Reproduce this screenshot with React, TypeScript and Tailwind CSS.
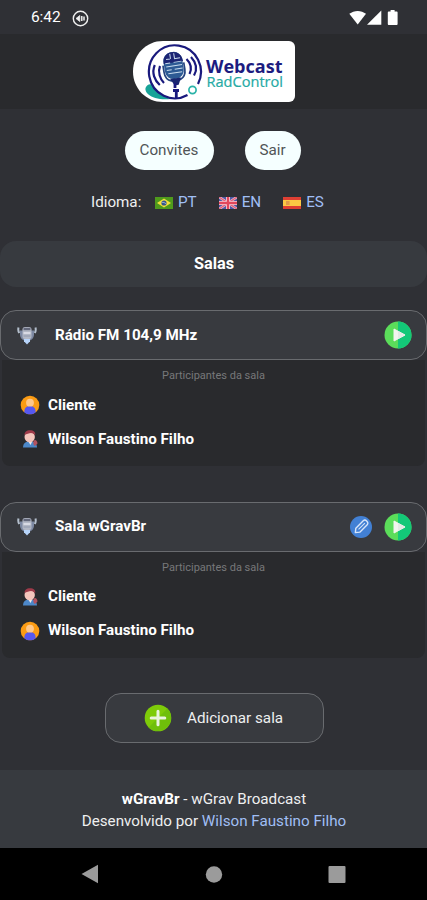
import type { ReactNode } from 'react'

type ParticipantKind = 'host' | 'guest'

interface Participant {
  name: string
  kind: ParticipantKind
}

interface Room {
  name: string
  editable: boolean
  participants: Participant[]
}

const ROOMS: Room[] = [
  {
    name: 'Rádio FM 104,9 MHz',
    editable: false,
    participants: [
      { name: 'Cliente', kind: 'host' },
      { name: 'Wilson Faustino Filho', kind: 'guest' },
    ],
  },
  {
    name: 'Sala wGravBr',
    editable: true,
    participants: [
      { name: 'Cliente', kind: 'guest' },
      { name: 'Wilson Faustino Filho', kind: 'host' },
    ],
  },
]

function StatusBar() {
  return (
    <div className="flex h-[34px] shrink-0 items-center bg-[#2f3035] pt-[2px] pl-[31px] pr-[28px] text-white">
      <span className="w-[30px] text-[15.500px] leading-none tracking-[-0.1px]">6:42</span>
      <svg className="ml-[11px]" width="17" height="17" viewBox="0 0 17 17" fill="none" stroke="#f0f0f0">
        <circle cx="8.5" cy="8.5" r="7.2" strokeWidth="1.4" />
        <path d="M4 8.500 7.800 5.500v6z" fill="#f0f0f0" strokeWidth="0.8" />
        <path d="M9.800 6v5M12 6.500v4" strokeWidth="1.5" />
      </svg>
      <svg className="ml-auto" width="50" height="16" viewBox="0 0 50 16" fill="#fff">
        <path d="M0.3 3.800C5.200-.1 12.200-.1 17 3.800L8.700 14.600z" />
        <path d="M32.300.4v14.400H18z" />
        <path d="M41.600 0h4v1.600h2.200c.5 0 .8.400.8.900V14c0 .5-.3.900-.8.900h-8.200c-.5 0-.8-.4-.8-.9V2.500c0-.5.3-.9.8-.9h2z" />
      </svg>
    </div>
  )
}

function Logo() {
  return (
    <svg width="162" height="61" viewBox="0 0 162 61">
      <path d="M30 0h126a6 6 0 0 1 6 6v49a6 6 0 0 1-6 6H30C13 61 0 47.500 0 30.500S13 0 30 0z" fill="#fff" />
      <path d="M12.500 47c1-3 4-4.500 6-3.500 5 8 11 12 19 14.500-10 1-18-1-22-4.500-2.500-2-3.500-4.500-3-6.500z" fill="#17a398" />
      {/* ring around the microphone, open where the small dot sits */}
      <path d="M54.500 54A26 26.500 0 1 1 65 43" fill="none" stroke="#19197d" strokeWidth="2.200" />
      <circle cx="59.500" cy="49" r="3.600" fill="#fff" stroke="#2bb3a8" strokeWidth="1.700" />
      <g transform="rotate(-9 40 24)">
        <rect x="31" y="11" width="19" height="27" rx="8.500" fill="#2d5a94" />
        <path d="M31 21.500c-.5-14 19.500-14 19.500 0z" fill="#1b2473" />
        <path
          d="M34 17.500h4M42 18h6M32.500 21.500h5M41 21.500h8M33 25h16M33 28.500h5M41 28.500h8M34 32h14M38.500 12.500v5M42.500 12.500v5"
          stroke="#c9dcee"
          strokeWidth="1"
        />
        <path d="M30 23v7c0 5.500 3 8.500 6 9.500h9c4-1.500 6-4.500 6-9.500v-7" fill="none" stroke="#24437f" strokeWidth="1.700" />
        <path d="M35 37.500h11l-3.500 7h-4z" fill="#19256f" />
      </g>
      <path d="M42 42v5M43.300 49v9M40 49.500h6" stroke="#19197d" strokeWidth="2.800" />
      <path
        d="M27 25c-2.400 6 0 13 4 17M21.800 24c-3.500 8 0 15.500 5 20M53.500 18c4.500 4.500 5.500 10 3 15M58 16c5.500 6 6.500 12.500 3 18.500"
        fill="none"
        stroke="#19197d"
        strokeWidth="2.200"
      />
      <text
        x="73"
        y="32.300"
        textLength="76.500"
        lengthAdjust="spacingAndGlyphs"
        className="font-['Open_Sans',sans-serif] text-[17px] font-bold"
        fill="#1c1c80"
      >
        Webcast
      </text>
      <text
        x="73.500"
        y="46"
        textLength="76.500"
        lengthAdjust="spacingAndGlyphs"
        className="font-['Open_Sans',sans-serif] text-[14.500px] font-medium"
        fill="#25aaa4"
        stroke="#25aaa4"
        strokeWidth="0.2"
      >
        RadControl
      </text>
    </svg>
  )
}

function BrazilFlag() {
  return (
    <svg width="18" height="12" viewBox="0 0 18 12">
      <path fill="#4f9a1c" d="M0 0h18v12H0z" />
      <path fill="#f3df3d" d="M9 1.500 16 6l-7 4.500L2 6z" />
      <circle cx="9" cy="6" r="2.600" fill="#34548c" />
      <path d="M6.700 5.300q2.500-.3 4.500 1.500" stroke="#d8e4ee" strokeWidth=".6" fill="none" />
    </svg>
  )
}

function UkFlag() {
  return (
    <svg width="18" height="12" viewBox="0 0 18 12">
      <path fill="#4b59a6" d="M0 0h18v12H0z" />
      <path d="M0 0l18 12M18 0 0 12" stroke="#efb8c6" strokeWidth="2.600" />
      <path d="M0 0l18 12M18 0 0 12" stroke="#e0607a" strokeWidth="1.200" />
      <path d="M9 0v12M0 6h18" stroke="#f3cfd9" strokeWidth="4" />
      <path d="M9 0v12M0 6h18" stroke="#e2475c" strokeWidth="2.300" />
    </svg>
  )
}

function SpainFlag() {
  return (
    <svg width="18" height="12" viewBox="0 0 18 12">
      <path fill="#de3f33" d="M0 0h18v12H0z" />
      <path fill="#fbc843" d="M0 3h18v6H0z" />
      <path fill="#e09a48" d="M3 4h3.600v4H3z" />
    </svg>
  )
}

function RoomIcon() {
  return (
    <svg width="20" height="19" viewBox="0 0 20 19">
      <path d="M1.500 1.500c-.5 2-.2 4 .8 5.500M18.500 1.500c.5 2 .2 4-.8 5.500" stroke="#b4bfcd" strokeWidth="2" fill="none" />
      <path d="M3 4.500h14v4c0 3.500-2.500 5.600-4.500 6.100h-5C5.500 14.100 3 12 3 8.500z" fill="#7d89a3" />
      <rect x="5.500" y="1" width="9" height="12" rx="2.500" fill="#b3b8c5" />
      <path d="M6.500 1.800h7v2.400h-7z" fill="#62677a" />
      <path d="M6.500 7h7" stroke="#e4e6ee" strokeWidth="1.500" />
      <path d="M6.500 10h7" stroke="#8f98ad" strokeWidth="1" />
      <path d="M7 13h6v2.300L10 18.500l-3-3.200z" fill="#b7d4fa" />
    </svg>
  )
}

function HostIcon() {
  return (
    <svg width="20" height="20" viewBox="0 0 20 20">
      <circle cx="10" cy="10" r="9.300" fill="#fb9c14" />
      <path d="M4.400 17.400c-.3-4 1.800-6.400 5.600-6.400s5.900 2.400 5.600 6.400c-3.300 2.500-7.900 2.500-11.200 0z" fill="#5658f0" />
      <circle cx="10" cy="7.700" r="3.900" fill="#ffc88a" />
    </svg>
  )
}

function GuestIcon() {
  return (
    <svg width="20" height="20" viewBox="0 0 20 20">
      <path d="M3 18.500c.2-4.200 2.200-6 7-6s6.800 1.800 7 6z" fill="#4d88c9" />
      <path d="M8 12h4.500l-2 4z" fill="#f4eeee" />
      <path d="M13.500 12c2-2.500 4 .5 4 2.500l-2.500 2.500c-1.500-1-2-2-1.500-5z" fill="#b4535f" />
      <circle cx="9.700" cy="8" r="5.200" fill="#f4c5bc" />
      <path d="M4.500 6C4.500 3 6.500 1.200 10 1.200s5.800 1.800 5.200 4.800C13.500 4.800 12.500 4 11 4c-2 .5-4.300.5-6.500 2z" fill="#9e3a49" />
    </svg>
  )
}

function PlayIcon() {
  return (
    <svg width="28" height="28" viewBox="0 0 28 28">
      <circle cx="14" cy="14" r="13.500" fill="#5bdd5a" />
      <path d="M14 .5a13.500 13.500 0 0 1 0 27z" fill="#13c878" />
      <path d="M10 8v12l11-6z" fill="#f2f4ee" stroke="#f2f4ee" strokeLinejoin="round" />
      <path d="M14 10v8l7.300-4z" fill="#e4eae4" />
    </svg>
  )
}

function EditIcon() {
  return (
    <svg width="22" height="22" viewBox="0 0 22 22">
      <circle cx="11" cy="11" r="11" fill="#4280d4" />
      <g transform="rotate(45 11 11)" fill="none" stroke="#d9e6fa" strokeWidth="1.400" strokeLinejoin="round">
        <path d="M8.200 5c0-3 5.600-3 5.600 0v10.500L11 19l-2.800-3.500z" />
        <path d="M11 5.500v9" strokeWidth="1" />
      </g>
    </svg>
  )
}

function AddIcon() {
  return (
    <svg width="28" height="28" viewBox="0 0 28 28">
      <circle cx="14" cy="14" r="13.300" fill="#7ecb09" />
      <path d="M23.400 4.600A13.300 13.300 0 0 1 4.600 23.400z" fill="#6fbf0a" />
      <path d="M14 7.200v13.600M7.200 14h13.600" stroke="#eaf3de" strokeWidth="3" strokeLinecap="round" />
    </svg>
  )
}

function Language({ flag, code }: { flag: ReactNode; code: string }) {
  return (
    <a className="flex items-center gap-[5px] text-[#a0bff5]">
      {flag}
      {code}
    </a>
  )
}

function RoomCard({ room }: { room: Room }) {
  return (
    <section>
      <div className="flex h-[50px] items-center rounded-[16px] border-[1.500px] border-[#696b6f] bg-[#383a3f] pl-[16px] pr-[14px]">
        <RoomIcon />
        <h2 className="ml-[18px] text-[15.200px] font-bold text-white">{room.name}</h2>
        <div className="ml-auto flex items-center gap-[12px]">
          {room.editable && <EditIcon />}
          <PlayIcon />
        </div>
      </div>
      <div className="mx-[2px] h-[106px] rounded-b-[8px] bg-[#292a2d] pt-[8px]">
        <p className="text-center text-[11px] leading-[16px] text-[#77787a]">Participantes da sala</p>
        <ul className="mt-[4px] pl-[18px]">
          {room.participants.map((p) => (
            <li key={p.name} className="flex h-[34px] items-center gap-[8px] text-[15.200px] font-bold text-white">
              {p.kind === 'host' ? <HostIcon /> : <GuestIcon />}
              {p.name}
            </li>
          ))}
        </ul>
      </div>
    </section>
  )
}

export default function App() {
  return (
    <div className="flex h-[900px] w-[427px] flex-col overflow-hidden bg-[#2f3035] font-['Roboto',sans-serif] text-[15.200px] text-[#eeeff0]">
      <StatusBar />
      <header className="flex h-[75px] shrink-0 justify-center bg-[#292a2d] pt-[7px] pl-[1px]">
        <Logo />
      </header>

      <nav className="mt-[22px] mr-[2px] flex justify-center gap-[31px]">
        <button className="h-[39px] w-[89px] rounded-full bg-[#f5ffff] text-[#505456]">Convites</button>
        <button className="h-[39px] w-[56px] rounded-full bg-[#f5ffff] text-[#505456]">Sair</button>
      </nav>

      <div className="mt-[22px] flex h-[21px] items-center pl-[91px]">
        <span className="w-[64px]">Idioma:</span>
        <div className="flex gap-[22px]">
          <Language flag={<BrazilFlag />} code="PT" />
          <Language flag={<UkFlag />} code="EN" />
          <Language flag={<SpainFlag />} code="ES" />
        </div>
      </div>

      <h1 className="mt-[28px] flex h-[46px] shrink-0 items-center justify-center rounded-[16px] bg-[#373a3f] pl-[1px] text-[16.300px] font-bold text-white">
        Salas
      </h1>

      <main className="mt-[23px] flex flex-col gap-[35.500px]">
        {ROOMS.map((room) => (
          <RoomCard key={room.name} room={room} />
        ))}
      </main>

      <button className="mx-auto mt-[35.500px] flex h-[50px] w-[219px] shrink-0 translate-x-[1px] items-center rounded-[16px] border-[1.500px] border-[#696b6f] bg-[#383a3f] pl-[38px]">
        <AddIcon />
        <span className="ml-[15px]">Adicionar sala</span>
      </button>

      <footer className="mt-auto h-[78px] shrink-0 bg-[#373a3f] pt-[17.500px] pl-[1px] text-center leading-[22.500px]">
        <p>
          <b className="text-white">wGravBr</b> - wGrav Broadcast
        </p>
        <p>
          Desenvolvido por <a className="text-[#a0bff5]">Wilson Faustino Filho</a>
        </p>
      </footer>

      <div className="h-[52px] shrink-0 bg-black pl-[81px] pt-[16px]">
        <svg width="265" height="20" viewBox="0 0 265 20" fill="#9b9b9b">
          <path d="M0.500 10 17 .8v18.400z" />
          <circle cx="133" cy="10.500" r="8.200" />
          <rect x="247.500" y="2" width="17" height="17" rx="1" />
        </svg>
      </div>
    </div>
  )
}
